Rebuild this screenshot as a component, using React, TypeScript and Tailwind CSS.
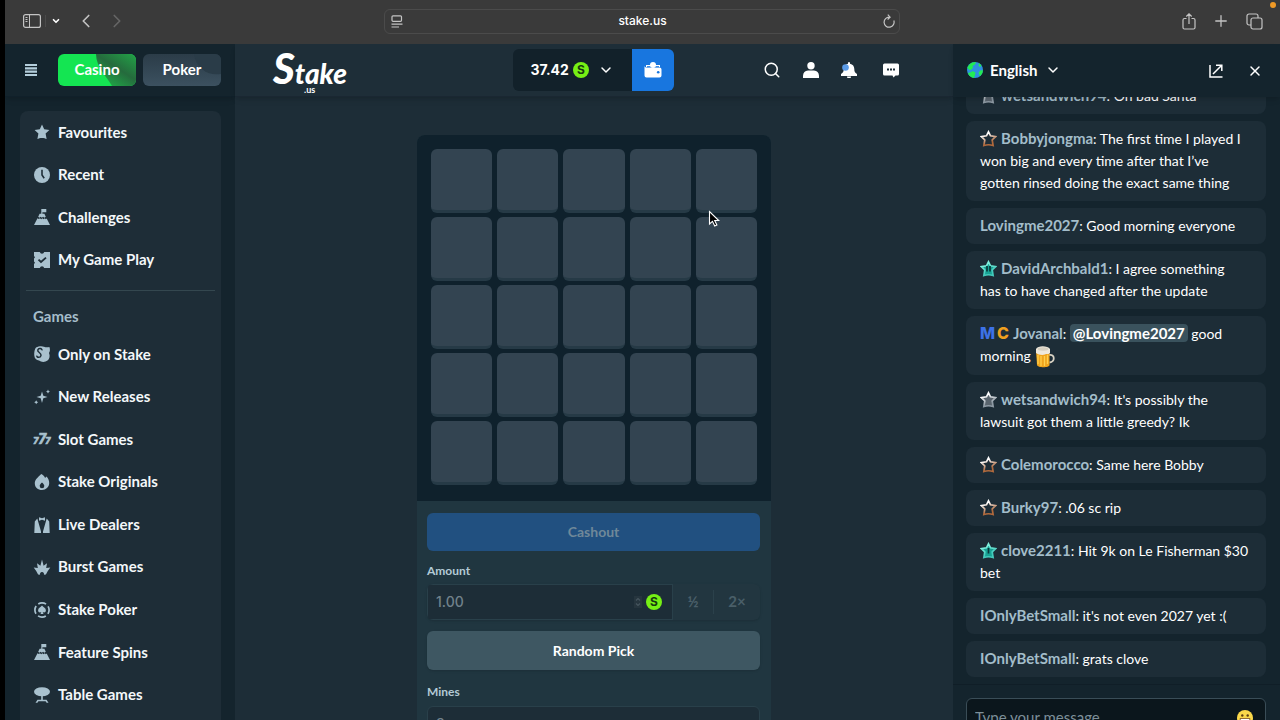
import type { ReactNode } from "react";
import { ChevronDown, ChevronLeft, ChevronRight, Plus, Search, X } from "lucide-react";

const icons: Record<string, ReactNode> = {
  star: <path d="M8 .6l2.200 4.700 5.200.6-3.800 3.600 1 5.600c-1-.5-2.800-1-4.600-1s-3.600.5-4.600 1l1-5.600L.6 5.900l5.200-.6z" />,
  clock: (
    <>
      <circle cx="8" cy="8" r="8" />
      <path d="M8 2.800v5.200l2.200 3.200" fill="none" stroke="#1e2d37" strokeWidth="1.600" />
    </>
  ),
  mountain: (
    <>
      <path d="M7.300 0h5v3.300H8.400v1.500h2l1.400 3-1.500 1-1.200-1-1.200 1-1.300-1-1.200 1L4.200 7.800l1.400-3h1.700z" />
      <path d="M3.500 9.300l1.300.8 1.200-.8 1.200.9 1.200-.9 1.200.9 1.200-.9 1 .9.900-.6L16 16H0z" />
    </>
  ),
  ticket: (
    <>
      <path d="M0 0h5.800a2.300 2.300 0 0 0 4.400 0H16v16h-5.800a2.300 2.300 0 0 0-4.400 0H0V12l1-1.200L0 9.600V6.400l1-1.200L0 4z" />
      <path d="M4.500 7.600l2.500 2.400 5-4.400" fill="none" stroke="#1e2d37" strokeWidth="1.900" />
    </>
  ),
  mask: (
    <>
      <path d="M2 1.500C5 0 8 0 10 .8c2 .8 3.800.5 5.400.2.900 2.500.6 4.600-.4 6 1.300 3 .5 6-1.500 7.600-2.200 1.600-6 1.800-8.500 0C2.500 14 .4 12.500.3 9.500 0 7 .5 3 2 1.500z" />
      <path
        d="M8 4.400c.4-2-3.400-2.800-4.200-.5C3 6.400 7.700 6.600 7 9.600 6.300 12 2.600 11.800 2.800 9.600"
        fill="none"
        stroke="#1e2d37"
        strokeWidth="1.500"
      />
    </>
  ),
  sparkle: (
    <>
      <path d="M8 2.500l1.300 4.200L13.500 8 9.300 9.300 8 14l-1.300-4.700L2.500 8l4.200-1.300z" />
      <path d="M14 .5l.7 1.400 1.300.6-1.300.7L14 4.500l-.7-1.300-1.300-.7 1.300-.6zM2.200 11.200l.7 1.400 1.300.6-1.300.7-.7 1.300-.7-1.300-1.300-.7 1.300-.6z" />
    </>
  ),
  slots: (
    <g fontFamily="Lato, sans-serif" fontWeight="900" fontStyle="italic" stroke="currentColor" strokeWidth=".7">
      <text x="-1" y="13" fontSize="10">7</text>
      <text x="4" y="13" fontSize="15">7</text>
      <text x="11" y="13" fontSize="10">7</text>
    </g>
  ),
  flame: (
    <path
      fillRule="evenodd"
      d="M7.200 0c2 .8 3.300 2.300 3.900 4l1.300-1.500C14.500 4.300 15.300 7 15.200 9.300 15 13.200 12 16 8 16S.8 13.200.8 9.400C.8 5.500 4 3.300 7.200 0zM8 8.500c-1.300 1.200-2.300 2.200-2.300 3.500A2.300 2.300 0 0 0 8 14.300a2.300 2.300 0 0 0 2.300-2.300C10.300 10.700 9.300 9.700 8 8.500z"
    />
  ),
  dealer: (
    <>
      <path d="M5 .2l3 1 3-1v3.600l-3-1-3 1z" />
      <path d="M3.300 1.500L7 14.500V16H.3L.8 4.500zM12.700 1.500L9 14.500V16h6.700l-.5-11.500z" />
    </>
  ),
  burst: (
    <path d="M8 .5l1.600 6.200 3.400-2.500-.8 4.800 4.100-.4-2.500 3.400-1.900 3.500-2 .3A2 2 0 0 0 8 13a2 2 0 0 0-1.900 2.800l-2-.3L2.200 12-.3 8.600l4.100.4L3 4.200l3.400 2.500z" />
  ),
  chip: (
    <>
      <circle cx="8" cy="8" r="7.100" fill="none" stroke="currentColor" strokeWidth="1.700" strokeDasharray="8.200 2.950" strokeDashoffset="4.100" />
      <path d="M8 3.600c1.500 1.700 3.900 2.600 3.900 4.800 0 2-2 2.500-3.200 1.500l.8 2h-3l.8-2C6.100 10.900 4.100 10.400 4.100 8.400c0-2.200 2.400-3.100 3.900-4.800z" />
    </>
  ),
  table: (
    <>
      <ellipse cx="8" cy="4.800" rx="8" ry="4.500" />
      <path d="M7.200 9h1.600v3.800h3.700l2 2.900h-1.900l-1-1.400H4.400l-1 1.400H1.500l2-2.900h3.700z" />
    </>
  ),
};

function Icon({ name }: { name: string }) {
  return (
    <svg viewBox="0 0 16 16" className="size-4 shrink-0 overflow-visible text-[#a9c1ce]" fill="currentColor">
      {icons[name]}
    </svg>
  );
}

function Coin() {
  return (
    <span className="flex size-4 shrink-0 items-center justify-center rounded-full bg-[#76f015] font-[Inter,sans-serif] text-xs font-bold leading-none text-[#173a10]">
      S
    </span>
  );
}

const mainLinks = [
  { label: "Favourites", icon: "star" },
  { label: "Recent", icon: "clock" },
  { label: "Challenges", icon: "mountain" },
  { label: "My Game Play", icon: "ticket" },
];

const gameLinks = [
  { label: "Only on Stake", icon: "mask" },
  { label: "New Releases", icon: "sparkle" },
  { label: "Slot Games", icon: "slots" },
  { label: "Stake Originals", icon: "flame" },
  { label: "Live Dealers", icon: "dealer" },
  { label: "Burst Games", icon: "burst" },
  { label: "Stake Poker", icon: "chip" },
  { label: "Feature Spins", icon: "mountain" },
  { label: "Table Games", icon: "table" },
];

function NavLink({ label, icon }: { label: string; icon: string }) {
  return (
    <li className="flex flex-1">
      <a href="#" className="flex flex-1 items-center gap-2 pl-[14px] text-[#f4f8fa]">
        <Icon name={icon} />
        {label}
      </a>
    </li>
  );
}

function BrowserBar() {
  return (
    <div className="relative grid h-11 shrink-0 grid-cols-[1fr_516px_1fr] items-center bg-[#3a3a3a] pb-[2px] pr-[2px] text-[#c4c4c4]">
      <div className="flex items-center pl-[18px]">
        <button aria-label="Sidebar">
          <svg viewBox="0 0 18 14" className="h-[14px] w-[18px]" fill="none" stroke="currentColor">
            <rect x=".6" y=".6" width="16.800" height="12.800" rx="2" strokeWidth="1.200" />
            <path d="M6.500 1v12M2.500 3.500h2M2.500 5.500h2M2.500 7.500h2" />
          </svg>
        </button>
        <button aria-label="Tab groups" className="ml-1 border-l border-[#4a4a4a] py-px pl-[5px] text-white">
          <ChevronDown className="size-[10px]" strokeWidth={4} />
        </button>
        <button aria-label="Back" className="ml-[14px]">
          <ChevronLeft className="size-[22px]" strokeWidth={1.8} />
        </button>
        <button aria-label="Forward" className="ml-[9px] text-[#666]">
          <ChevronRight className="size-[22px]" strokeWidth={1.8} />
        </button>
      </div>
      <div className="flex h-[25px] items-center rounded-md border border-[#4b4b4b] pl-[6px] pr-1">
        <svg viewBox="0 0 12 13" className="h-[13px] w-3" fill="none" stroke="currentColor" strokeWidth="1.200">
          <rect x="1" y=".8" width="9.500" height="5.500" rx="1" />
          <path d="M.5 9.200h11M.5 12h7.500" />
        </svg>
        <input
          aria-label="Address"
          defaultValue="stake.us"
          className="min-w-0 flex-1 bg-transparent text-center font-[Inter,sans-serif] text-xs font-medium text-white"
        />
        <button aria-label="Reload">
          <svg viewBox="0 0 12 14" className="h-[14px] w-3" fill="none" stroke="currentColor" strokeWidth="1.200">
            <path d="M10.800 6.500A5 5 0 1 1 6.500 3.200M4.800.6l2.300 2.500-2.500 2.400" />
          </svg>
        </button>
      </div>
      <div className="flex items-center justify-end pr-[15px]">
        <button aria-label="Share">
          <svg viewBox="0 0 14 17" className="h-[17px] w-[14px]" fill="none" stroke="currentColor" strokeWidth="1.200">
            <path d="M4.500 5.500h-2a1.500 1.500 0 0 0-1.500 1.500v7.500A1.500 1.500 0 0 0 2.500 16h9a1.500 1.500 0 0 0 1.500-1.500V7a1.500 1.500 0 0 0-1.500-1.500h-2M7 11V1M4.300 3.500L7 .9l2.700 2.600" />
          </svg>
        </button>
        <button aria-label="New tab" className="ml-4">
          <Plus className="size-[18px]" strokeWidth={1.7} />
        </button>
        <button aria-label="Tabs" className="ml-4">
          <svg viewBox="0 0 17 17" className="size-[17px]" fill="none" stroke="currentColor" strokeWidth="1.200">
            <rect x="5" y="5" width="11" height="11" rx="2" />
            <path d="M5 12H3a2 2 0 0 1-2-2V3a2 2 0 0 1 2-2h7a2 2 0 0 1 2 2v2" />
          </svg>
        </button>
      </div>
      <span className="absolute right-1 top-[2px] size-[6px] rounded-full bg-[#f09a26]" />
    </div>
  );
}

function Sidebar() {
  return (
    <aside className="flex w-[230px] shrink-0 flex-col bg-[#14242d] text-[15px]">
      <div className="flex h-[53px] shrink-0 items-center border-b border-[#10202a] pl-5 pr-[14px] shadow-md">
        <button aria-label="Menu" className="mr-[21px]">
          <svg viewBox="0 0 12 12" className="size-3" fill="#b4cedb">
            <path d="M0 0h12v2.100H0zM0 3.300h12v2.100H0zM0 6.600h12v2.100H0zM0 9.900h12V12H0z" />
          </svg>
        </button>
        <button className="relative h-8 flex-1 overflow-hidden rounded-md bg-[#14e552] font-bold text-white">
          <svg viewBox="0 0 78 32" className="absolute inset-0 size-full" preserveAspectRatio="none">
            <defs>
              <linearGradient id="casino" x1="1" y1="0" x2=".2" y2="1">
                <stop offset="0" stopColor="#22a347" />
                <stop offset=".5" stopColor="#256b3d" />
                <stop offset="1" stopColor="#1fae48" />
              </linearGradient>
            </defs>
            <path d="M38 0h40v32H54C50 24 38 14 38 0z" fill="url(#casino)" />
          </svg>
          <span className="relative">Casino</span>
        </button>
        <button className="relative ml-[7px] h-8 flex-1 overflow-hidden rounded-md bg-linear-to-b from-[#2b3c48] to-[#3c5160] font-bold text-white">
          <svg viewBox="0 0 78 32" className="absolute inset-0 size-full" preserveAspectRatio="none">
            <path d="M51 0h27v20c-14 2-25-6-27-20z" fill="#2a3c48" />
          </svg>
          <span className="relative">Poker</span>
        </button>
      </div>
      <nav className="ml-[15px] mr-[14px] mt-[14px] flex-1 rounded-t-lg bg-[#1e2d37] font-bold">
        <ul className="flex h-[170px] flex-col">
          {mainLinks.map((link) => (
            <NavLink key={link.label} {...link} />
          ))}
        </ul>
        <hr className="mx-[6px] mt-[9px] border-[#34474f]" />
        <h2 className="pb-[7px] pl-[13px] pt-[15px] leading-5 text-[#a5bdca]">Games</h2>
        <ul className="flex h-[383px] flex-col">
          {gameLinks.map((link) => (
            <NavLink key={link.label} {...link} />
          ))}
        </ul>
      </nav>
    </aside>
  );
}

function Header() {
  return (
    <header className="grid h-[53px] shrink-0 grid-cols-[1fr_auto_1fr] items-center border-b border-[#1a2732] bg-[#1e2e38] pl-[38px] pr-[54px] shadow-md">
      <a href="#" aria-label="Stake.us" className="relative w-fit text-white">
        <span className="flex items-baseline font-[Lato,sans-serif] font-black italic leading-9">
          <span className="text-[42px] leading-9">S</span>
          <span className="text-[28px] leading-9">take</span>
        </span>
        <span className="absolute bottom-[-3px] left-[31px] text-[9px] font-bold leading-none">.us</span>
      </a>
      <div className="mr-[-14px] flex h-[42px] overflow-hidden rounded-md text-white">
        <button className="flex w-[119px] items-center bg-[#12212a] pl-[18px] font-[Inter,sans-serif] font-bold">
          <span className="mr-1">37.42</span>
          <Coin />
          <ChevronDown className="ml-[9px] size-4" strokeWidth={2.2} />
        </button>
        <button aria-label="Wallet" className="flex w-[42px] items-center justify-center bg-[#1876df]">
          <svg viewBox="0 0 18 16" className="h-4 w-[18px]" fill="white">
            <path d="M2 3h14v2H2zM.5 3.500C.5 5 1.500 5.500 2.500 5.500h13a2 2 0 0 1 2 2V13.500a2 2 0 0 1-2 2h-13a2 2 0 0 1-2-2z" />
            <path d="M3 4.700h12" stroke="#1876df" />
            <circle cx="9" cy="3" r="3" />
            <circle cx="14.200" cy="10.300" r="1.300" fill="#1876df" />
          </svg>
        </button>
      </div>
      <div className="flex items-center justify-end gap-[22px] text-white">
        <button aria-label="Search">
          <Search className="size-[18px] overflow-visible" strokeWidth={2} />
        </button>
        <button aria-label="Account">
          <svg viewBox="0 0 16 16" className="size-4" fill="currentColor">
            <circle cx="8" cy="3.700" r="3.700" />
            <path d="M0 16v-2.500A5.500 5.500 0 0 1 5 8.500h6a5.500 5.500 0 0 1 5 5V16z" />
          </svg>
        </button>
        <button aria-label="Notifications">
          <svg viewBox="0 0 16 16" className="size-4" fill="currentColor">
            <path d="M7 .3h2v1.400c2.800.5 4.300 2.600 4.300 5.300 0 2.500.6 3.600 2.700 5V14H0v-2c2.100-1.400 2.700-2.500 2.700-5C2.700 4.300 4.200 2.200 7 1.700zM6 14.500h4a2 2 0 0 1-4 0z" />
            <circle cx="4.500" cy="5.500" r="3.300" fill="#5a9be8" />
          </svg>
        </button>
        <button aria-label="Chat" className="ml-1">
          <svg viewBox="0 0 16 16" className="size-4" fill="currentColor">
            <path d="M1.500 1.500h13a1.500 1.500 0 0 1 1.500 1.500v9a1.500 1.500 0 0 1-1.500 1.500H12.500L10.500 15.500 9.500 13.500h-8A1.500 1.500 0 0 1 0 12V3a1.500 1.500 0 0 1 1.500-1.500z" />
            <path d="M4 6.500h2v2H4zM7 6.500h2v2H7zM10 6.500h2v2h-2z" fill="#1e2e38" />
          </svg>
        </button>
      </div>
    </header>
  );
}

function Game() {
  return (
    <section className="mx-auto mt-[38px] w-full max-w-[354px] rounded-t-lg bg-[#203640]">
      <div className="grid grid-cols-5 gap-x-[5px] gap-y-1 rounded-t-lg bg-[#0f212c] px-[14px] pb-4 pt-[14px]">
        {Array.from({ length: 25 }, (_, i) => (
          <button
            key={i}
            aria-label={`Tile ${i + 1}`}
            className="h-16 rounded-md border-b-3 border-[#263a46] bg-[#334451]"
          />
        ))}
      </div>
      <form className="flex flex-col pl-[10px] pr-[11px] pt-3 font-bold">
        <button type="button" disabled className="h-[38px] rounded-md bg-[#215080] text-[#6f8899]">
          Cashout
        </button>
        <label htmlFor="amount" className="mt-[10px] text-xs leading-5 text-[#b3cad5]">
          Amount
        </label>
        <div className="mt-[3px] flex h-9 overflow-hidden rounded-md bg-[#223640] shadow-sm">
          <div className="flex min-w-0 flex-1 items-center border border-[#29404a] bg-[#1d2d37] pl-2 pr-[10px]">
            <input
              id="amount"
              disabled
              defaultValue="1.00"
              className="min-w-0 flex-1 bg-transparent font-[Inter,sans-serif] font-medium text-[#71828b]"
            />
            <svg viewBox="0 0 8 12" className="mr-1 h-3 w-2 bg-[#26353e]" fill="none" stroke="#46555e" strokeWidth="1.200">
              <path d="M2 4.500l2-2 2 2M2 7.500l2 2 2-2" />
            </svg>
            <Coin />
          </div>
          <button type="button" disabled className="w-10 shrink-0 text-[15px] text-[#4a5f69]">
            ½
          </button>
          <span className="my-[6px] w-px bg-[#2b414b]" />
          <button type="button" disabled className="w-[46px] shrink-0 text-[15px] text-[#4a5f69]">
            2×
          </button>
        </div>
        <button type="button" className="mt-[11px] h-[39px] rounded-md bg-[#3e5762] text-white shadow-sm">
          Random Pick
        </button>
        <label htmlFor="mines" className="mt-3 text-xs leading-5 text-[#b3cad5]">
          Mines
        </label>
        <select
          id="mines"
          disabled
          className="mt-1 h-9 appearance-none rounded-md border border-[#29404a] bg-[#1d2d37] pl-2 font-[Inter,sans-serif] font-medium text-[#71828b] opacity-100"
        >
          <option>3</option>
        </select>
      </form>
    </section>
  );
}

const badges: Record<string, { fill: string; from: string; to: string; marks?: string }> = {
  bronze: { fill: "none", from: "#ffffff", to: "#b0693c" },
  silver: { fill: "#59646d", from: "#ffffff", to: "#8d99a3" },
  teal2: { fill: "#17a394", from: "#7ff0de", to: "#43c9bb", marks: "M7 6v5.500M10 6v5.500" },
  teal1: { fill: "#17a394", from: "#7ff0de", to: "#43c9bb", marks: "M8.500 6v5.500" },
};

function Badge({ type }: { type: string }) {
  const badge = badges[type];
  return (
    <svg viewBox="0 0 17 17" className="mr-1 inline size-[17px] align-[-3px]">
      <defs>
        <linearGradient id={`badge-${type}`} x1=".2" y1="0" x2=".6" y2="1">
          <stop offset=".2" stopColor={badge.from} />
          <stop offset=".8" stopColor={badge.to} />
        </linearGradient>
      </defs>
      <path
        d="M8.500 1.800l2 4 5 .9-3.300 3.300.9 5.500c-3-1-6.200-1-9.200 0l.9-5.500L1.500 6.700l5-.9z"
        fill={badge.fill}
        stroke={`url(#badge-${type})`}
        strokeWidth="1.700"
      />
      {badge.marks && <path d={badge.marks} stroke="#07373a" strokeWidth="1.700" />}
    </svg>
  );
}

function Beer() {
  return (
    <svg viewBox="0 0 20 22" className="ml-px inline h-[22px] w-5 align-[-7px]">
      <path d="M14 9c6-1.500 6.500 7 .5 7.500" fill="none" stroke="#d8d2c4" strokeWidth="1.800" />
      <path d="M1 4h13.500v15c0 3-12 3-12.500 0z" fill="#f0a41c" />
      <path d="M3 9v9M6 10v10M9.500 10v10M12.500 9v9" stroke="#ffcf4d" strokeWidth="1.300" />
      <path d="M1 3c2-4 12-3.500 14 0v4c-2 2-3 .5-5 1.500S3 9 1 7z" fill="#efe9dc" />
      <ellipse cx="8" cy="3" rx="5.500" ry="1.700" fill="#d6cfc0" />
    </svg>
  );
}

type Message = { user: string; text: ReactNode; badge?: string; lead?: ReactNode };

const messages: Message[] = [
  { user: "wetsandwich94", badge: "silver", text: "Oh bad Santa" },
  {
    user: "Bobbyjongma",
    badge: "bronze",
    text: (
      <>
        The first time I played I won big and every time after that I’ve
        <br />
        gotten rinsed doing the exact same thing
      </>
    ),
  },
  { user: "Lovingme2027", text: "Good morning everyone" },
  {
    user: "DavidArchbald1",
    badge: "teal2",
    text: (
      <>
        I agree something
        <br />
        has to have changed after the update
      </>
    ),
  },
  {
    user: "Jovanal",
    lead: (
      <span className="mr-1 font-[Inter,sans-serif] text-base font-extrabold leading-none">
        <span className="mr-[2px] text-[#3d72e8]">M</span>
        <span className="text-[#f0a01e]">C</span>
      </span>
    ),
    text: (
      <>
        <a href="#" className="rounded-sm bg-[#3a525d] px-[3px] text-[15px] font-bold leading-5">
          @Lovingme2027
        </a>{" "}
        good
        <br />
        morning <Beer />
      </>
    ),
  },
  { user: "wetsandwich94", badge: "silver", text: "It's possibly the lawsuit got them a little greedy? Ik" },
  { user: "Colemorocco", badge: "bronze", text: "Same here Bobby" },
  { user: "Burky97", badge: "bronze", text: ".06 sc rip" },
  { user: "clove2211", badge: "teal1", text: "Hit 9k on Le Fisherman $30 bet" },
  { user: "IOnlyBetSmall", text: "it's not even 2027 yet :(" },
  { user: "IOnlyBetSmall", text: "grats clove" },
];

function Chat() {
  return (
    <aside className="flex w-[327px] shrink-0 flex-col bg-[#14242d] text-white">
      <div className="z-10 flex h-[53px] shrink-0 items-center bg-[#14242d] pl-[14px] pr-[17px] shadow-md">
        <button className="flex items-center text-[15px] font-bold">
          <svg viewBox="0 0 16 16" className="mr-[7px] size-4">
            <circle cx="8" cy="8" r="8" fill="#2f8fe0" />
            <path d="M2 3C4 .6 7 0 9 .1L8 2.500 5.500 4 6 6 3 8.500.3 6C.5 5 1 4 2 3zM5.500 9l3 1.500L8 13l-1 2.900C4.500 15.500 2 14 1 11.500c1-1.500 3-.5 4.500-2.500zM12 1l2.500 2.400L13.200 5 11.500 4zM13 8.500l2.900-.2c0 2.500-1.300 4.700-3 6L11.500 11z" fill="#22ec52" />
          </svg>
          English
          <ChevronDown className="ml-2 size-4" strokeWidth={2.2} />
        </button>
        <button aria-label="Pop out" className="ml-auto">
          <svg viewBox="0 0 14 14" className="size-[14px]" fill="none" stroke="currentColor" strokeWidth="1.500">
            <path d="M1 1v12h12.500M4 10l8.500-8.500M7 1.200h5.800V7" />
          </svg>
        </button>
        <button aria-label="Close chat" className="ml-6">
          <X className="size-4 overflow-visible" strokeWidth={2.2} />
        </button>
      </div>
      <ul className="flex min-h-0 flex-1 flex-col justify-end gap-[7px] overflow-hidden pb-[7px] pl-[13px] pr-[14px] leading-[22px]">
        {messages.map((message, i) => (
          <li key={i} className="shrink-0 rounded-lg bg-[#1d2d37] px-[14px] py-[7px]">
            {message.badge && <Badge type={message.badge} />}
            {message.lead}
            <a href="#" className="text-[15px] font-bold leading-5 text-[#a3bdca]">
              {message.user}
            </a>
            : {message.text}
          </li>
        ))}
      </ul>
      <div className="h-9 shrink-0 border-t border-[#101e27] pl-[13px] pr-[14px] pt-[13px]">
        <div className="flex h-10 items-center rounded-md border border-[#3a4d57] bg-[#0b161c] px-2">
          <input
            aria-label="Message"
            placeholder="Type your message"
            className="min-w-0 flex-1 bg-transparent text-[15px] placeholder:text-[#7d8f99]"
          />
          <button aria-label="Emoji" className="mr-1">
            <svg viewBox="0 0 16 16" className="size-4">
              <circle cx="8" cy="8" r="8" fill="#fbd84a" />
              <circle cx="5.300" cy="5.500" r="1.200" fill="#5b3d12" />
              <circle cx="10.700" cy="5.500" r="1.200" fill="#5b3d12" />
              <path d="M3 8.500h10c0 6-10 6-10 0z" fill="#fff" stroke="#7a4d16" strokeWidth=".8" />
            </svg>
          </button>
        </div>
      </div>
    </aside>
  );
}

export default function App() {
  return (
    <div className="relative flex h-screen flex-col overflow-hidden bg-black pl-[5px] font-[Lato,sans-serif] text-sm">
      <BrowserBar />
      <div className="flex min-h-0 flex-1">
        <Sidebar />
        <main className="flex min-w-0 flex-1 flex-col bg-[#1d2d37]">
          <Header />
          <Game />
        </main>
        <Chat />
      </div>
      <svg viewBox="0 0 10 17" className="pointer-events-none absolute left-[709px] top-[211px] h-[17px] w-[10px] overflow-visible">
        <path d="M.5.500v12.500l3-2.700 2.200 4.700 2.200-1-2.200-4.500h4z" fill="black" stroke="white" strokeWidth="1.100" />
      </svg>
    </div>
  );
}
